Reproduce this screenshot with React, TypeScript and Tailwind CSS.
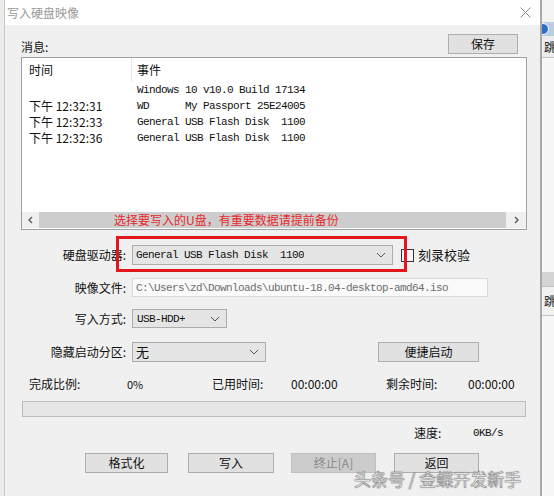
import React from 'react';

const cjk = "font-['Noto_Sans_CJK_SC','Noto_Sans',sans-serif]";
const mono = "font-['Liberation_Mono','Noto_Sans_CJK_SC',monospace] text-[11px] leading-[14px] tracking-[-0.6px]";

function Chevron() {
  return (
    <svg width="10" height="6" viewBox="0 0 10 6" className="shrink-0">
      <path d="M1 1 L5 5 L9 1" fill="none" stroke="#555" strokeWidth="1" />
    </svg>
  );
}

function Combo({ width, children, height = 'h-[20px]' }: { width: string; children: React.ReactNode; height?: string }) {
  return (
    <div
      className={`${width} ${height} flex items-center justify-between border border-[#adadad] bg-[#e5e5e5] pl-[3px] pr-[6px]`}
    >
      <div className="truncate flex items-center">{children}</div>
      <Chevron />
    </div>
  );
}

function Button({ label, width, disabled = false }: { label: string; width: string; disabled?: boolean }) {
  return (
    <div
      className={`${width} h-[20px] flex items-center justify-center border text-[12px] ${
        disabled
          ? 'border-[#bfbfbf] bg-[#cccccc] text-[#8a8a8a]'
          : 'border-[#adadad] bg-[#e1e1e1] text-[#111]'
      }`}
    >
      {label}
    </div>
  );
}

function FormLabel({ text }: { text: string }) {
  return <div className="w-[127px] shrink-0 pr-[6px] text-right text-[12px] text-[#111]">{text}:</div>;
}

const logRows = [
  { time: '', event: 'Windows 10 v10.0 Build 17134' },
  { time: '下午 12:32:31', event: 'WD      My Passport 25E24005' },
  { time: '下午 12:32:33', event: 'General USB Flash Disk  1100' },
  { time: '下午 12:32:36', event: 'General USB Flash Disk  1100' },
];

export default function App() {
  return (
    <div className={`flex w-[554px] h-[496px] overflow-hidden bg-white ${cjk}`}>
      {/* outer window edge */}
      <div className="w-[5px] h-full bg-[#ececec] border-r border-[#c8c8c8]" />

      {/* Dialog */}
      <div className="w-[537px] h-full flex flex-col border-r-2 border-[#a9a9a9]">
        {/* Title bar */}
        <div className="h-[25px] shrink-0 flex items-center justify-between bg-white pl-[2px] pr-[9px]">
          <span className="text-[12px] text-[#9a9a9a]">写入硬盘映像</span>
          <svg width="11" height="11" viewBox="0 0 11 11">
            <path d="M0.5 0.5 L10.5 10.5 M10.5 0.5 L0.5 10.5" stroke="#8c8c8c" strokeWidth="1" />
          </svg>
        </div>

        {/* Body */}
        <div className="relative flex-1 bg-[#f0f0f0] flex flex-col">
          {/* Messages header */}
          <div className="mt-[10px] h-[19px] flex items-end justify-between pl-[16px] pr-[22px]">
            <span className="text-[12px] leading-[14px] text-[#111]">消息:</span>
            <Button label="保存" width="w-[70px]" />
          </div>

          {/* Log list */}
          <div className="ml-[16px] mt-[3px] w-[506px] h-[173px] border border-[#a0a0a0] bg-white flex flex-col">
            <div className="h-[24px] flex items-center text-[12px] text-[#111]">
              <span className="w-[109px] pl-[7px]">时间</span>
              <span className="w-px h-full bg-[#e6e6e6]" />
              <span className="pl-[5px]">事件</span>
            </div>
            {logRows.map((r, i) => (
              <div key={i} className="h-[16px] flex items-center text-[#111]">
                <span className="w-[115px] pl-[7px] text-[12px] whitespace-pre">{r.time}</span>
                <span className={`${mono} whitespace-pre`}>{r.event}</span>
              </div>
            ))}
            {/* horizontal scrollbar */}
            <div className="mt-auto mb-px h-[16px] flex bg-[#f0f0f0]">
              <div className="w-[17px] flex items-center justify-center">
                <svg width="5" height="8" viewBox="0 0 5 8">
                  <path d="M4 1 L1 4 L4 7" fill="none" stroke="#606060" strokeWidth="1.5" />
                </svg>
              </div>
              <div className="w-[467px] bg-[#cdcdcd] flex items-center pl-[75px] text-[12px] text-[#e8282c] whitespace-nowrap">
                选择要写入的U盘，有重要数据请提前备份
              </div>
              <div className="flex-1 flex items-center justify-center">
                <svg width="5" height="8" viewBox="0 0 5 8">
                  <path d="M1 1 L4 4 L1 7" fill="none" stroke="#606060" strokeWidth="1.5" />
                </svg>
              </div>
            </div>
          </div>

          {/* Drive row */}
          <div className="relative mt-[15px] h-[20px] flex items-center">
            <FormLabel text="硬盘驱动器" />
            <Combo width="w-[261px]">
              <span className={`${mono} text-[#111] whitespace-pre`}>General USB Flash Disk  1100</span>
            </Combo>
            <div className="ml-[8px] w-[13px] h-[13px] border border-[#333] bg-[#f7f7f7]" />
            <span className="ml-[4px] text-[13px] text-[#111]">刻录校验</span>
            {/* red annotation box */}
            <div className="absolute left-[111px] top-[-9px] w-[291px] h-[36px] border-[3px] border-[#e3161c]" />
          </div>

          {/* Image file row */}
          <div className="mt-[13px] h-[19px] flex items-center">
            <FormLabel text="映像文件" />
            <div className="w-[356px] h-[19px] flex items-center border border-[#d9d9d9] bg-[#fafafa] pl-[3px]">
              <span className={`${mono} text-[#6d6d6d] whitespace-pre`}>
                C:\Users\zd\Downloads\ubuntu-18.04-desktop-amd64.iso
              </span>
            </div>
          </div>

          {/* Write mode row */}
          <div className="mt-[12px] h-[19px] flex items-center">
            <FormLabel text="写入方式" />
            <Combo width="w-[95px]" height="h-[19px]">
              <span className={`${mono} text-[#111] pl-[1px]`}>USB-HDD+</span>
            </Combo>
          </div>

          {/* Hidden partition row */}
          <div className="mt-[13px] h-[21px] flex items-center">
            <FormLabel text="隐藏启动分区" />
            <Combo width="w-[134px]">
              <span className="text-[13px] text-[#111]">无</span>
            </Combo>
            <div className="ml-[112px]">
              <Button label="便捷启动" width="w-[101px]" />
            </div>
          </div>

          {/* Stats row */}
          <div className="mt-[14px] h-[16px] flex items-center pl-[24px] text-[12px] text-[#111]">
            <span className="w-[98px]">完成比例:</span>
            <span className="w-[85px] text-[11px]">0%</span>
            <span className="w-[79px]">已用时间:</span>
            <span className="w-[95px]">00:00:00</span>
            <span className="w-[82px]">剩余时间:</span>
            <span>00:00:00</span>
          </div>

          {/* Progress bar */}
          <div className="ml-[17px] mt-[9px] w-[504px] h-[16px] border border-[#bcbcbc] bg-[#e6e6e6]" />

          {/* Speed row */}
          <div className="mt-[8px] h-[16px] flex items-center pl-[409px] text-[12px] text-[#111]">
            <span className="w-[59px]">速度:</span>
            <span className={mono}>0KB/s</span>
          </div>

          {/* Action buttons */}
          <div className="mt-[12px] flex pl-[80px]">
            <Button label="格式化" width="w-[83px]" />
            <div className="ml-[20px]">
              <Button label="写入" width="w-[86px]" />
            </div>
            <div className="ml-[17px]">
              <Button label="终止[A]" width="w-[85px]" disabled />
            </div>
            <div className="ml-[18px]">
              <Button label="返回" width="w-[85px]" />
            </div>
          </div>

          {/* watermark */}
          <div className="absolute left-[349px] top-[444px] text-[17px] leading-[20px] text-white whitespace-nowrap [-webkit-text-stroke:0.6px_#8a8a8a] [text-shadow:0_0_2px_rgba(0,0,0,0.35)]">
            头条号 / 金蝶开发新手
          </div>
        </div>
      </div>

      {/* background window edge */}
      <div className="flex-1 h-full flex flex-col overflow-hidden bg-[#f7f7f7]">
        <div className="h-[22px] bg-[#f3f3f3]" />
        <div className="h-[14px] bg-[#b9cde3] flex items-center">
          <div className="w-[12px] h-[12px] -ml-[5px] rounded-full bg-[#2f6fc9] border border-white" />
        </div>
        <div className="h-[22px] bg-[#ececec] border-b border-[#c4c4c4] flex items-center overflow-hidden">
          <span className="ml-[2px] text-[12px] text-[#111] whitespace-nowrap">跳</span>
        </div>
        <div className="h-[214px]" />
        <div className="h-[15px] bg-[#d4d4d4] border-b border-[#bdbdbd]" />
        <div className="h-[29px] bg-[#f1f1f1] border-b border-[#c4c4c4] flex items-center overflow-hidden">
          <span className="ml-[2px] text-[12px] text-[#111] whitespace-nowrap">跳</span>
        </div>
      </div>
    </div>
  );
}
